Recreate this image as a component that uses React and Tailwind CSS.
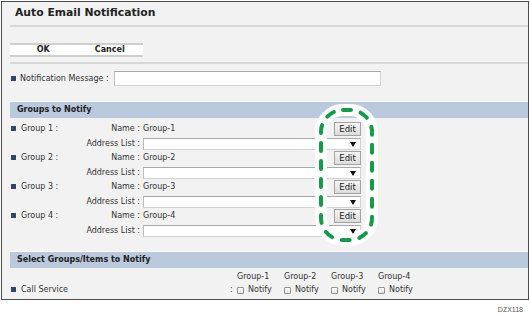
import React from 'react';

const Bullet = () => <span className="inline-block w-[5px] h-[5px] bg-[#34466b] shrink-0" />;

function Select() {
  return (
    <div className="relative w-[218px] h-[12px] bg-white border border-[#d2d2d2] border-t-[#a8a8a8] border-l-[#bcbcbc]">
      <svg className="absolute right-[4px] top-[3px]" width="6" height="5" viewBox="0 0 6 5">
        <path d="M0 0 L6 0 L3 5 Z" fill="#111" />
      </svg>
    </div>
  );
}

function GroupRow({ n }) {
  return (
    <div>
      <div className="flex items-center h-[14px]">
        <div className="w-[130px] flex items-center">
          <span className="ml-[1px]"><Bullet /></span>
          <span className="ml-[5px]">Group {n} :</span>
          <span className="ml-auto">Name :</span>
        </div>
        <div className="ml-[3px] w-[218px] flex items-center justify-between">
          <span>Group-{n}</span>
          <button className="h-[14px] w-[27px] flex items-center justify-center bg-gradient-to-b from-[#f4f4f4] to-[#dcdcdc] border border-[#a3a3a3] text-[8.5px] text-[#222] leading-none">
            Edit
          </button>
        </div>
      </div>
      <div className="flex items-center h-[15px]">
        <div className="w-[130px] text-right">Address List :</div>
        <div className="ml-[3px]">
          <Select />
        </div>
      </div>
    </div>
  );
}

const Checkbox = () => (
  <span className="inline-block w-[7px] h-[7px] rounded-[1px] border border-[#929292] bg-gradient-to-b from-white to-[#e2e2e2] shrink-0" />
);

function NotifyRow({ label, className = '' }) {
  return (
    <div className={`flex items-center h-[12px] ${className}`}>
      <div className="w-[219px] flex items-center">
        <span className="ml-[1px]"><Bullet /></span>
        <span className="ml-[5px]">{label}</span>
      </div>
      <span className="w-[8px] pl-[1px]">:</span>
      {[1, 2, 3, 4].map((i) => (
        <div key={i} className="w-[47px] flex items-center">
          <Checkbox />
          <span className="ml-[4px]">Notify</span>
        </div>
      ))}
    </div>
  );
}

export default function App() {
  return (
    <div className="relative w-[530px] h-[316px] bg-white overflow-hidden" style={{ fontFamily: '"DejaVu Sans", Verdana, sans-serif' }}>
      <div className="ml-[1px] mt-[1px] w-[528px] h-[299px] border border-[#4d4d4d] bg-[#f2f2f2] overflow-hidden pl-[8px] text-[8px] text-[#333] leading-none">
        {/* Title */}
        <div className="h-[23px] flex items-center pl-[5px] text-[10.8px] font-bold text-[#222]">
          Auto Email Notification
        </div>
        <div className="h-[2px] bg-[#d7d7d7]" />

        {/* OK / Cancel */}
        <div className="mt-[16px] w-[133px] h-[14px] flex bg-white border-y-2 border-[#cfcfcf] font-bold text-[#222]">
          <div className="flex-1 flex items-center justify-center">OK</div>
          <div className="flex-1 flex items-center justify-center">Cancel</div>
        </div>
        <div className="mt-[5px] h-[2px] bg-[#d7d7d7]" />

        {/* Notification message */}
        <div className="mt-[7px] h-[15px] flex items-center">
          <span className="ml-[1px]"><Bullet /></span>
          <span className="ml-[4px]">Notification Message :</span>
          <div className="ml-[5px] w-[267px] h-[15px] bg-white border border-[#d2d2d2] border-t-[#a8a8a8] border-l-[#bcbcbc]" />
        </div>

        {/* Groups to Notify */}
        <div className="mt-[15px] h-[17px] border-t border-[#fbfbfb] bg-[#bac9de] flex items-center pl-[7px] font-bold text-[#222]">
          Groups to Notify
        </div>
        <div className="mt-[4px]">
          {[1, 2, 3, 4].map((n) => (
            <GroupRow key={n} n={n} />
          ))}
        </div>

        {/* Select Groups/Items */}
        <div className="mt-[13px] h-[17px] border-t border-[#fbfbfb] bg-[#bac9de] flex items-center pl-[7px] font-bold text-[#222]">
          Select Groups/Items to Notify
        </div>
        <div className="mt-[3px] h-[12px] flex items-center pl-[227px]">
          {[1, 2, 3, 4].map((i) => (
            <div key={i} className="w-[47px]">Group-{i}</div>
          ))}
        </div>
        <div className="mt-[1px]">
          <NotifyRow label="Call Service" />
          <NotifyRow label="Supply Alert" className="mt-[2px]" />
        </div>
      </div>

      <div className="mt-[5px] flex justify-end pr-[7px] text-[7px] text-[#555]" style={{ fontFamily: '"Liberation Sans", Arial, sans-serif' }}>
        DZX118
      </div>

      {/* highlight around Edit buttons */}
      <svg className="absolute left-[314px] top-[101px]" width="66" height="146" viewBox="0 0 66 146">
        <rect x="7" y="9" width="51" height="130" rx="22" fill="none" stroke="#ffffff" strokeWidth="12" />
        <rect x="7" y="9" width="51" height="130" rx="22" fill="none" stroke="#16994a" strokeWidth="4" strokeDasharray="8 10" strokeLinecap="round" />
      </svg>
    </div>
  );
}
